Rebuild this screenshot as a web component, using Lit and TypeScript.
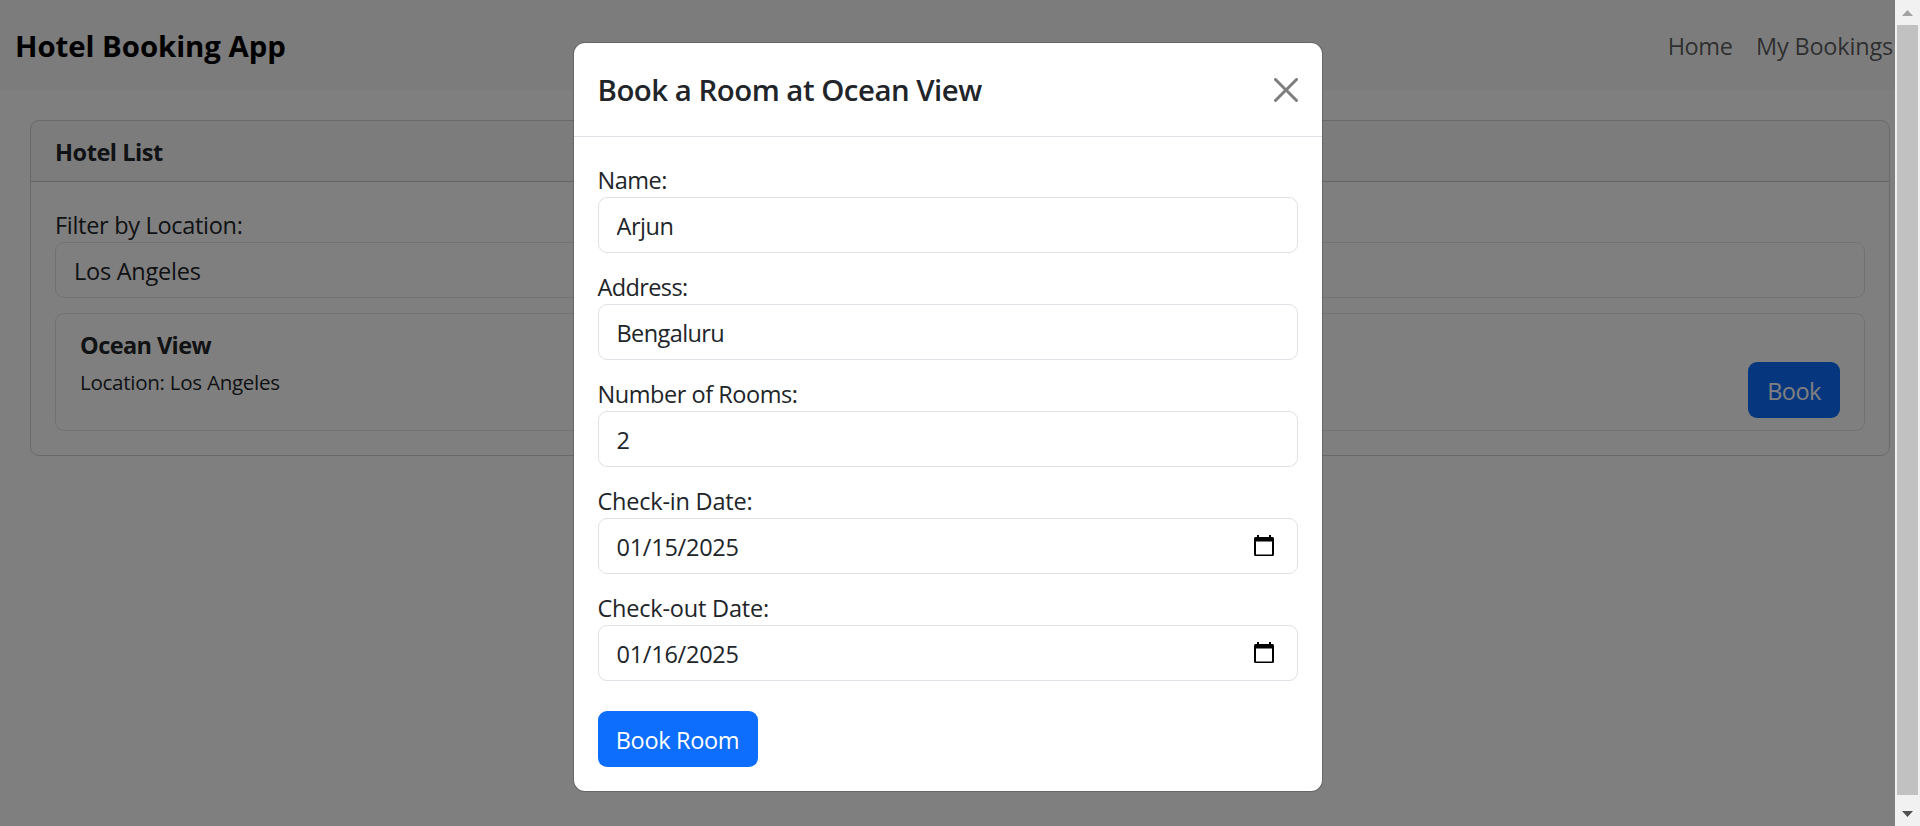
import { LitElement, html, css, nothing } from "lit";
import { customElement, property, state } from "lit/decorators.js";

interface Field {
  label: string;
  value: string;
  date?: boolean;
  labelSpacing: number;
  valueSpacing: number;
}

const FIELDS: Field[] = [
  { label: "Name:", value: "Arjun", labelSpacing: -0.5, valueSpacing: -0.46 },
  { label: "Address:", value: "Bengaluru", labelSpacing: -0.62, valueSpacing: -0.6 },
  { label: "Number of Rooms:", value: "2", labelSpacing: -0.46, valueSpacing: 0 },
  { label: "Check-in Date:", value: "01/15/2025", date: true, labelSpacing: -0.22, valueSpacing: -0.26 },
  { label: "Check-out Date:", value: "01/16/2025", date: true, labelSpacing: -0.21, valueSpacing: -0.26 },
];

@customElement("form-field")
class FormField extends LitElement {
  @property({ attribute: false }) field!: Field;

  static styles = css`
    :host {
      display: block;
    }
    .label {
      display: block;
      height: 34px;
      padding-top: 2px;
      line-height: 34px;
    }
    .control {
      display: flex;
      align-items: center;
      height: 56px;
      box-sizing: border-box;
      padding: 0 23px 0 18px;
      border: 1px solid #dee2e6;
      border-radius: 9px;
      background: #fff;
    }
    .input {
      flex: 1;
      min-width: 0;
      height: 54px;
      padding: 2px 0 0;
      border: 0;
      outline: 0;
      box-sizing: border-box;
      background: transparent;
      color: inherit;
      font: inherit;
    }
    .calendar {
      display: block;
      width: 20px;
      height: 22px;
    }
  `;

  render() {
    const f = this.field;
    return html`
      <label class="label" for="input" style="letter-spacing:${f.labelSpacing}px">${f.label}</label>
      <div class="control">
        <input
          id="input"
          class="input"
          type="text"
          .value=${f.value}
          style="letter-spacing:${f.valueSpacing}px"
        />
        ${f.date
          ? html`<svg class="calendar" viewBox="0 0 20 22" aria-hidden="true">
              <path
                fill="#000"
                fill-rule="evenodd"
                d="M3 0h2v2h10V0h2v2h1.500A1.500 1.500 0 0 1 20 3.500V19.500A1.500 1.500 0 0 1 18.500 21H1.500A1.500 1.500 0 0 1 0 19.500V3.500A1.500 1.500 0 0 1 1.500 2H3zM2 6.500V19.500h16V6.500z"
              />
            </svg>`
          : nothing}
      </div>
    `;
  }
}

@customElement("page-scrollbar")
class PageScrollbar extends LitElement {
  static styles = css`
    :host {
      display: flex;
      flex-direction: column;
      width: 25px;
      height: 100%;
      background: #f1f1f1;
    }
    .cap {
      display: flex;
      justify-content: center;
      height: 25px;
      flex: none;
    }
    .cap.end {
      height: 31px;
    }
    .arrow {
      width: 25px;
      height: 25px;
    }
    .thumb {
      flex: 1;
      margin: 0 2px;
      background: #c1c1c1;
    }
  `;

  render() {
    return html`
      <div class="cap">
        <svg class="arrow" viewBox="0 0 25 25"><path fill="#a3a3a3" d="M7 16L12.500 10L18 16z" /></svg>
      </div>
      <div class="thumb"></div>
      <div class="cap end">
        <svg class="arrow" viewBox="0 0 25 25"><path fill="#505050" d="M7 16L12.500 22L18 16z" /></svg>
      </div>
    `;
  }
}

@customElement("app-root")
class AppRoot extends LitElement {
  @state() private open = true;

  static styles = css`
    :host {
      display: flex;
      position: relative;
      width: 100%;
      height: 826px;
      overflow: hidden;
      background: #fff;
      color: #212529;
      font: 400 23.52px/36px "Open Sans", "Segoe UI", sans-serif;
    }
    .page {
      flex: 1;
      position: relative;
      min-width: 0;
    }
    .navbar {
      display: flex;
      align-items: center;
      justify-content: space-between;
      box-sizing: border-box;
      height: 90px;
      padding: 2px 2px 0 15px;
      background: #f8f9fa;
      white-space: nowrap;
    }
    .brand {
      font-size: 29.4px;
      font-weight: 700;
      color: #000;
      letter-spacing: -0.06px;
    }
    .nav {
      display: flex;
      gap: 23.5px;
      color: rgba(0, 0, 0, 0.65);
    }
    .home {
      letter-spacing: -0.42px;
    }
    .bookings {
      letter-spacing: -0.2px;
    }
    .card {
      margin: 30px 5px 0 30px;
      height: 336px;
      box-sizing: border-box;
      border: 1px solid rgba(0, 0, 0, 0.175);
      border-radius: 9px;
      overflow: hidden;
    }
    .card-header {
      height: 61px;
      box-sizing: border-box;
      padding: 13px 24px 0;
      border-bottom: 1px solid rgba(0, 0, 0, 0.175);
      background: rgba(33, 37, 41, 0.03);
      font-weight: 700;
      letter-spacing: -0.45px;
    }
    .card-body {
      padding: 25px 24px;
    }
    .filter-label {
      display: block;
      height: 35px;
      letter-spacing: -0.31px;
    }
    .select {
      height: 56px;
      box-sizing: border-box;
      padding: 10px 18px;
      border: 1px solid #dee2e6;
      border-radius: 9px;
      letter-spacing: -0.25px;
    }
    .hotel {
      display: flex;
      justify-content: space-between;
      height: 118px;
      box-sizing: border-box;
      margin-top: 15px;
      padding: 13px 24px 12px;
      border: 1px solid #dee2e6;
      border-radius: 9px;
    }
    .hotel-name {
      font-weight: 700;
      letter-spacing: -0.59px;
    }
    .hotel-location {
      margin-top: 1px;
      font-size: 20.58px;
      letter-spacing: -0.29px;
    }
    .button {
      display: block;
      height: 56px;
      box-sizing: border-box;
      padding: 2px 0 0;
      border: 0;
      border-radius: 9px;
      background: #0d6efd;
      color: #fff;
      font: inherit;
    }
    .book {
      align-self: flex-end;
      width: 92px;
      letter-spacing: -0.6px;
    }
    .backdrop {
      position: absolute;
      inset: 0;
      display: flex;
      justify-content: center;
      align-items: flex-start;
      padding: 42px 0 0;
      background: rgba(0, 0, 0, 0.5);
    }
    .modal {
      width: 750px;
      height: 750px;
      box-sizing: border-box;
      border: 1px solid rgba(0, 0, 0, 0.175);
      border-radius: 12px;
      background: #fff;
      background-clip: padding-box;
    }
    .modal-header {
      display: flex;
      align-items: center;
      justify-content: space-between;
      height: 94px;
      box-sizing: border-box;
      padding: 1px 24px 0;
      border-bottom: 1px solid #dee2e6;
    }
    .title {
      margin: 0;
      font-size: 29.4px;
      font-weight: 600;
      letter-spacing: -0.49px;
    }
    .close {
      width: 24px;
      height: 24px;
      padding: 0;
      border: 0;
      background: none;
      opacity: 0.5;
    }
    .cross {
      display: block;
      width: 24px;
      height: 24px;
    }
    .modal-body {
      display: flex;
      flex-direction: column;
      gap: 15px;
      padding: 24px;
    }
    .submit {
      width: 160px;
      margin-top: 15px;
      letter-spacing: -0.34px;
    }
  `;

  private toggle(open: boolean) {
    this.open = open;
  }

  render() {
    return html`
      <div class="page">
        <nav class="navbar">
          <span class="brand">Hotel Booking App</span>
          <div class="nav"><span class="home">Home</span><span class="bookings">My Bookings</span></div>
        </nav>
        <section class="card">
          <div class="card-header">Hotel List</div>
          <div class="card-body">
            <span class="filter-label">Filter by Location:</span>
            <div class="select">Los Angeles</div>
            <article class="hotel">
              <div>
                <div class="hotel-name">Ocean View</div>
                <div class="hotel-location">Location: Los Angeles</div>
              </div>
              <button class="button book" @click=${() => this.toggle(true)}>Book</button>
            </article>
          </div>
        </section>
        ${this.open ? this.renderModal() : nothing}
      </div>
      <page-scrollbar></page-scrollbar>
    `;
  }

  private renderModal() {
    return html`
      <div class="backdrop">
        <div class="modal" role="dialog">
          <header class="modal-header">
            <h2 class="title">Book a Room at Ocean View</h2>
            <button class="close" aria-label="Close" @click=${() => this.toggle(false)}>
              <svg class="cross" viewBox="0 0 16 16">
                <path
                  d="M.293.293a1 1 0 0 1 1.414 0L8 6.586 14.293.293a1 1 0 1 1 1.414 1.414L9.414 8l6.293 6.293a1 1 0 0 1-1.414 1.414L8 9.414l-6.293 6.293a1 1 0 0 1-1.414-1.414L6.586 8 .293 1.707a1 1 0 0 1 0-1.414z"
                />
              </svg>
            </button>
          </header>
          <div class="modal-body">
            ${FIELDS.map((f) => html`<form-field .field=${f}></form-field>`)}
            <button class="button submit">Book Room</button>
          </div>
        </div>
      </div>
    `;
  }
}
